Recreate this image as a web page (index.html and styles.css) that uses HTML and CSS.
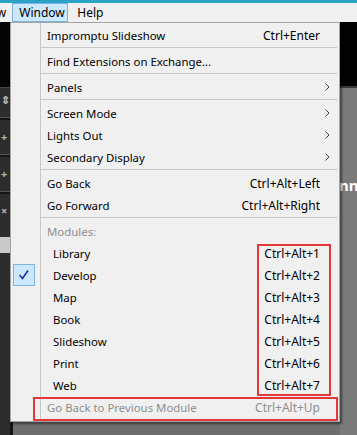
FILE: index.html
```html
<!DOCTYPE html>
<html lang="en">
<head>
    <meta charset="UTF-8">
    <meta name="viewport" content="width=device-width, initial-scale=1.0">
    <title>Window menu</title>
    <link rel="stylesheet" href="styles.css">
</head>
<body>
    <div class="topline"></div>
    <nav class="menubar">
        <span class="menubar-item cut">View</span>
        <span class="menubar-item open">Window</span>
        <span class="menubar-item">Help</span>
    </nav>

    <div class="workspace">
        <aside class="left-panel">
            <div class="lp-black"></div>
            <div class="lp-icon">&#8661;</div>
            <div class="lp-bar"></div>
            <div class="lp-icon">+</div>
            <div class="lp-bar"></div>
            <div class="lp-icon">+</div>
            <div class="lp-bar"></div>
            <div class="lp-icon">&#215;</div>
            <div class="lp-light"></div>
        </aside>

        <div class="middle">
            <div class="menu">
                <div class="row"><span></span><span class="label">Impromptu Slideshow</span><span class="key">Ctrl+Enter</span><span></span></div>
                <div class="sep"></div>
                <div class="row"><span></span><span class="label">Find Extensions on Exchange...</span><span class="key"></span><span></span></div>
                <div class="sep"></div>
                <div class="row"><span></span><span class="label">Panels</span><span class="key"></span><span class="arrow"><svg width="5" height="8" viewBox="0 0 5 8"><polyline points="0.5,0.5 4,4 0.5,7.5" fill="none" stroke="#444" stroke-width="1"/></svg></span></div>
                <div class="sep"></div>
                <div class="row"><span></span><span class="label">Screen Mode</span><span class="key"></span><span class="arrow"><svg width="5" height="8" viewBox="0 0 5 8"><polyline points="0.5,0.5 4,4 0.5,7.5" fill="none" stroke="#444" stroke-width="1"/></svg></span></div>
                <div class="row"><span></span><span class="label">Lights Out</span><span class="key"></span><span class="arrow"><svg width="5" height="8" viewBox="0 0 5 8"><polyline points="0.5,0.5 4,4 0.5,7.5" fill="none" stroke="#444" stroke-width="1"/></svg></span></div>
                <div class="row"><span></span><span class="label">Secondary Display</span><span class="key"></span><span class="arrow"><svg width="5" height="8" viewBox="0 0 5 8"><polyline points="0.5,0.5 4,4 0.5,7.5" fill="none" stroke="#444" stroke-width="1"/></svg></span></div>
                <div class="sep"></div>
                <div class="row"><span></span><span class="label">Go Back</span><span class="key">Ctrl+Alt+Left</span><span></span></div>
                <div class="row"><span></span><span class="label">Go Forward</span><span class="key">Ctrl+Alt+Right</span><span></span></div>
                <div class="sep"></div>
                <div class="row disabled"><span></span><span class="label">Modules:</span><span class="key"></span><span></span></div>

                <div class="modules">
                    <div class="row"><span></span><span class="label module">Library</span><span class="key">Ctrl+Alt+1</span><span></span></div>
                    <div class="row"><span class="check"><svg width="22" height="22" viewBox="0 0 22 22"><polyline points="6.5,11 9.5,14.5 15,6.5" fill="none" stroke="#1b2f96" stroke-width="1.6"/></svg></span><span class="label module">Develop</span><span class="key">Ctrl+Alt+2</span><span></span></div>
                    <div class="row"><span></span><span class="label module">Map</span><span class="key">Ctrl+Alt+3</span><span></span></div>
                    <div class="row"><span></span><span class="label module">Book</span><span class="key">Ctrl+Alt+4</span><span></span></div>
                    <div class="row"><span></span><span class="label module">Slideshow</span><span class="key">Ctrl+Alt+5</span><span></span></div>
                    <div class="row"><span></span><span class="label module">Print</span><span class="key">Ctrl+Alt+6</span><span></span></div>
                    <div class="row"><span></span><span class="label module">Web</span><span class="key">Ctrl+Alt+7</span><span></span></div>
                    <div class="mark keys-mark"></div>
                </div>

                <div class="row disabled last">
                    <span></span><span class="label">Go Back to Previous Module</span><span class="key">Ctrl+Alt+Up</span><span></span>
                    <div class="mark row-mark"></div>
                </div>
            </div>
        </div>

        <aside class="right-panel">
            <div class="rp-black"></div>
            <div class="rp-gray"><span class="rp-text">nn</span></div>
        </aside>
    </div>
</body>
</html>
```

FILE: styles.css
```css
* {
    box-sizing: border-box;
}

html, body {
    margin: 0;
    width: 357px;
    height: 435px;
    overflow: hidden;
}

body {
    font-family: "Noto Sans", "Open Sans", sans-serif;
    font-size: 12px;
    color: #000;
    background-color: #6e6e6e;
}

.topline {
    height: 3px;
    background-color: #2aa2c5;
}

.menubar {
    display: flex;
    height: 19px;
    background-color: #f0f0f0;
    overflow: hidden;
    white-space: nowrap;
}

.menubar-item {
    padding: 0 6px;
    line-height: 17px;
    border: 1px solid transparent;
}

.menubar-item.cut {
    margin-left: -27px;
    padding-right: 0;
}

.menubar-item.open {
    margin-left: 5px;
    background-color: #cce8ff;
    border-color: #7fb4e0;
    width: 56px;
}

.menubar-item:last-child {
    margin-left: 2px;
}

.workspace {
    display: flex;
    height: 413px;
}

/* panneau de gauche */
.left-panel {
    width: 12px;
    background-color: #2c2c2c;
    display: flex;
    flex-direction: column;
    align-items: flex-start;
    color: #b5b5b5;
    font-size: 11px;
    font-weight: bold;
}

.lp-black {
    width: 100%;
    height: 66px;
    background-color: #050505;
    border-bottom: 1px solid #444;
}

.lp-icon {
    height: 24px;
    line-height: 24px;
    padding-left: 1px;
}

.lp-bar {
    width: 10px;
    height: 3px;
    margin: 5px 0;
    background-color: #141414;
    border-top: 1px solid #555;
}

.lp-light {
    width: 10px;
    height: 16px;
    margin-top: 14px;
    background-color: #c9c9c9;
}

.middle {
    width: 330px;
    border-left: 3px solid #121212;
}

/* le menu */
.menu {
    position: relative;
    width: 330px;
    margin-left: -3px;
    height: 400px;
    padding: 1px 0 3px;
    background-color: #f0f0f0;
    background-image: linear-gradient(to right, transparent 29px, #c8c8c8 29px, #c8c8c8 30px, transparent 30px);
    border: 1px solid #a3a3a3;
    box-shadow: 2px 2px 2px rgba(0, 0, 0, 0.45);
}

.row {
    display: grid;
    grid-template-columns: 29px 1fr auto 19px;
    align-items: center;
    height: 22px;
    white-space: nowrap;
}

.label {
    padding-left: 7px;
    font-size: 11.4px;
}

.label.module {
    padding-left: 13px;
}

.key {
    text-align: right;
}

.arrow {
    display: flex;
    align-items: center;
    padding-left: 5px;
}

.sep {
    height: 4px;
    margin-left: 30px;
    margin-right: 2px;
    background-image: linear-gradient(#c6c6c6, #c6c6c6);
    background-size: 100% 1px;
    background-position: 0 1px;
    background-repeat: no-repeat;
}

.disabled {
    color: #8e8e8e;
}

.check {
    display: flex;
    width: 22px;
    height: 22px;
    margin-left: 2px;
    background-color: #cce8ff;
    border: 1px solid #7fb4e0;
}

.check svg {
    margin: -1px;
}

.modules,
.last {
    position: relative;
}

/* annotations rouges */
.mark {
    position: absolute;
    border: 2px solid #e5363a;
}

.keys-mark {
    top: 2px;
    bottom: 0;
    right: 8px;
    width: 74px;
}

.row-mark {
    top: 1px;
    left: 22px;
    right: 1px;
    height: 24px;
}

/* panneau de droite */
.right-panel {
    flex: 1;
    display: flex;
    flex-direction: column;
}

.rp-black {
    height: 66px;
    background-color: #020202;
    border-bottom: 2px solid #3a3a3a;
}

.rp-gray {
    flex: 1;
    background-color: #7a7a7a;
    padding-top: 89px;
    overflow: hidden;
}

.rp-text {
    display: block;
    margin-left: -1px;
    color: #fff;
    font-size: 15px;
    font-weight: bold;
    line-height: 16px;
}
```
